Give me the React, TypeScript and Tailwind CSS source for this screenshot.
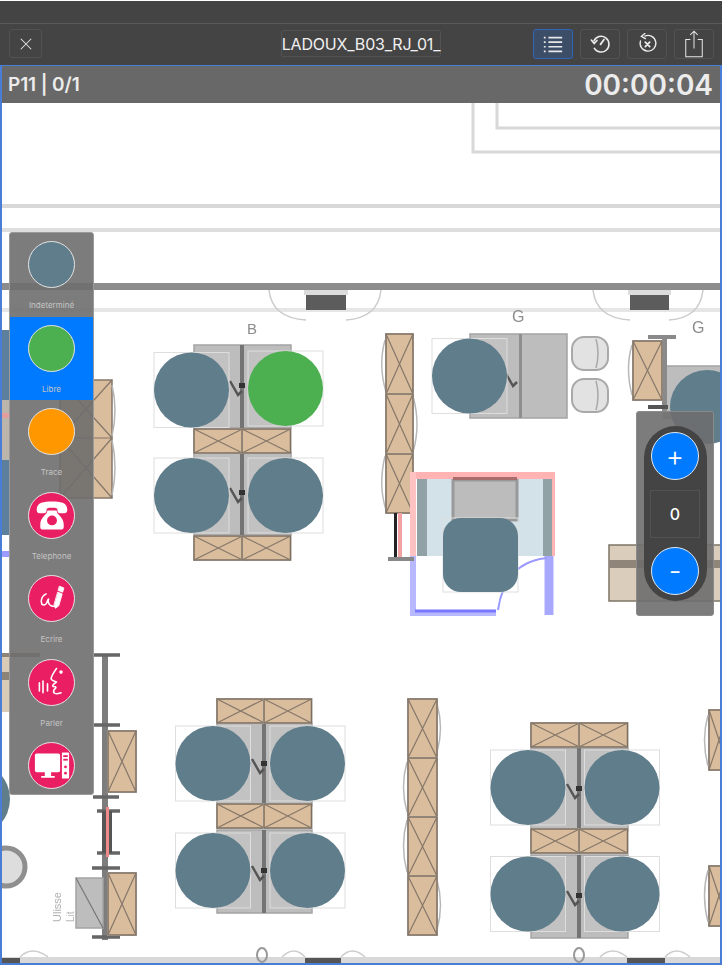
import React from "react";

function Cabinet({ x, y, w, h }: { x: number; y: number; w: number; h: number }) {
  return (
    <g>
      <rect x={x - 1} y={y - 1} width={w + 2} height={h + 2} fill="#cfcfcf" />
      <rect x={x} y={y} width={w} height={h} fill="#d9bd9d" stroke="#7d6f60" strokeWidth={1.5} />
      <path d={`M${x} ${y} L${x + w} ${y + h} M${x + w} ${y} L${x} ${y + h}`} stroke="#85776a" strokeWidth={1.2} fill="none" />
    </g>
  );
}

function DeskPair({ x, y, w, h, cx }: { x: number; y: number; w: number; h: number; cx: number }) {
  return (
    <g>
      <rect x={x} y={y} width={w} height={h} fill="#bdbdbd" stroke="#a4a4a4" strokeWidth={1.5} />
      <rect x={cx - 2} y={y} width={4} height={h} fill="#747474" />
      <path d={`M${cx - 12} ${y + 36} l8 14 l4 -4`} stroke="#555" strokeWidth={2.5} fill="none" />
      <rect x={cx - 3} y={y + 38} width={6} height={5} fill="#333" />
    </g>
  );
}

function Marker({ cx, cy, fill = "#607d8b" }: { cx: number; cy: number; fill?: string }) {
  return <circle cx={cx} cy={cy} r={37.5} fill={fill} />;
}

function Frame({ cx, cy }: { cx: number; cy: number }) {
  return <rect x={cx - 37.5} y={cy - 37.5} width={75} height={75} fill="#ffffff" fillOpacity={0.08} stroke="#dedede" strokeWidth={1} />;
}

function Quad({ dx, dy, cx, deskW, top, mid, circles }: { dx: number; dy: number; cx: number; deskW: number; top: number; mid: number; circles: [number, number][] }) {
  return (
    <g>
      <DeskPair x={dx} y={dy} w={deskW} h={83} cx={cx} />
      <DeskPair x={dx} y={dy + 107} w={deskW} h={83} cx={cx} />
      <Cabinet x={dx} y={top} w={deskW / 2} h={24} />
      <Cabinet x={cx} y={top} w={deskW / 2} h={24} />
      <Cabinet x={dx} y={mid} w={deskW / 2} h={24} />
      <Cabinet x={cx} y={mid} w={deskW / 2} h={24} />
      {circles.map(([a, b]) => (
        <Frame key={`${a}-${b}`} cx={a} cy={b} />
      ))}
      {circles.map(([a, b]) => (
        <Marker key={`${a}-${b}`} cx={a} cy={b} />
      ))}
    </g>
  );
}

function Chair({ x, y }: { x: number; y: number }) {
  return (
    <g>
      <rect x={x} y={y} width={36} height={33} rx={12} fill="#e2e2e2" stroke="#a9a9a9" strokeWidth={2} />
      <path d={`M${x + 24} ${y + 2}Q${x + 28} ${y + 16} ${x + 24} ${y + 31}`} stroke="#a9a9a9" strokeWidth={1.5} fill="none" />
    </g>
  );
}

function FloorPlan() {
  return (
    <svg viewBox="2 103 718 860" className="absolute left-0 top-0 h-full w-full blur-[0.7px]">
      {/* walls */}
      <path d="M473 103V152H722M497 103V128H722" stroke="#d8d8d8" strokeWidth={3} fill="none" />
      <rect x={0} y={204} width={722} height={4} fill="#d9d9d9" />
      <rect x={0} y={228} width={722} height={4} fill="#dedede" />
      <rect x={0} y={283} width={722} height={7} fill="#8c8c8c" />
      <rect x={0} y={308} width={722} height={4} fill="#e6e6e6" />
      <rect x={306} y={295} width={40} height={15} fill="#5c5c5c" />
      <rect x={630} y={295} width={39} height={15} fill="#5c5c5c" />
      <rect x={304} y={290} width={44} height={5} fill="#dcdcdc" />
      <rect x={628} y={290} width={43} height={5} fill="#dcdcdc" />
      <path d="M269 290Q272 318 306 320M381 290Q378 318 346 320M593 290Q596 318 630 320M703 290Q700 318 669 320" stroke="#cccccc" strokeWidth={1.5} fill="none" />
      <text x={247} y={334} fontSize={15} fill="#8c8c8c" fontFamily="Liberation Sans, sans-serif">B</text>
      <text x={512} y={322} fontSize={16} fill="#8c8c8c" fontFamily="Liberation Sans, sans-serif">G</text>
      <text x={692} y={333} fontSize={16} fill="#8c8c8c" fontFamily="Liberation Sans, sans-serif">G</text>

      {/* left side, mostly under the palette */}
      <rect x={0} y={330} width={10} height={70} fill="#5b7f9c" />
      <rect x={0} y={400} width={10} height={60} fill="#bcb5ac" />
      <rect x={0} y={413} width={10} height={5} fill="#e49c9c" />
      <rect x={0} y={460} width={10} height={75} fill="#5b7f9c" />
      <rect x={0} y={551} width={10} height={6} fill="#9c9cff" />
      <rect x={0} y={655} width={10} height={57} fill="#d9cbb8" />
      <rect x={0} y={672} width={10} height={8} fill="#8d8478" />
      <rect x={0} y={653} width={40} height={4} fill="#8d8478" />
      <circle cx={-27} cy={799} r={37} fill="#607d8b" />
      <circle cx={6} cy={867} r={19} fill="#dddddd" stroke="#8f8f8f" strokeWidth={5} />

      {/* tan block next to the palette */}
      <rect x={60} y={380} width={52} height={118} fill="#d9bd9d" stroke="#85776a" strokeWidth={1.5} />
      <path d="M60 380L112 438M112 380L60 438M60 438L112 498M112 438L60 498M60 438H112" stroke="#85776a" strokeWidth={1.2} fill="none" />
      <path d="M112 385Q118 410 112 436M112 440Q118 468 112 495" stroke="#b5b5b5" strokeWidth={1.5} fill="none" />

      {/* desks */}
      <Quad dx={194} dy={345} cx={242} deskW={97} top={429} mid={536} circles={[[191.5, 390], [191.5, 495.5], [285.5, 495.5]]} />
      <Frame cx={285.5} cy={388.5} />
      <Marker cx={285.5} cy={388.5} fill="#4caf50" />

      <Quad dx={217} dy={723} cx={264} deskW={95} top={699} mid={804} circles={[[213, 763.5], [307.5, 763.5], [213, 870.5], [307.5, 870.5]]} />
      <Quad dx={531} dy={748} cx={579} deskW={97} top={723} mid={829} circles={[[528, 787.5], [622, 787.5], [528, 894], [622, 894]]} />

      {/* vertical cabinets */}
      <path d="M385 340Q378 365 386 392M413 396Q421 425 413 452M385 456Q378 485 386 510" stroke="#b8b8b8" strokeWidth={1.5} fill="none" />
      <Cabinet x={386} y={334} w={27} h={60} />
      <Cabinet x={386} y={394} w={27} h={60} />
      <Cabinet x={386} y={454} w={27} h={59} />
      <path d="M437 704Q444 728 437 752M407 762Q400 787 407 812M407 820Q400 846 407 872M437 880Q444 905 437 930" stroke="#b8b8b8" strokeWidth={1.5} fill="none" />
      <Cabinet x={408} y={699} w={29} h={59} />
      <Cabinet x={408} y={758} w={29} h={59} />
      <Cabinet x={408} y={817} w={29} h={59} />
      <Cabinet x={408} y={876} w={29} h={59} />
      <Cabinet x={709} y={710} w={20} h={60} />
      <Cabinet x={709} y={866} w={20} h={60} />
      <path d="M708 715Q701 740 708 766M708 870Q701 895 708 922" stroke="#b8b8b8" strokeWidth={1.5} fill="none" />

      {/* single desk */}
      <rect x={470} y={334} width={97} height={84} fill="#bdbdbd" stroke="#a4a4a4" strokeWidth={1.5} />
      <rect x={519} y={334} width={3} height={84} fill="#8e8e8e" />
      <path d="M505 372l8 14 l4 -4" stroke="#555" strokeWidth={2.5} fill="none" />
      <Frame cx={469.5} cy={376} />
      <Marker cx={469.5} cy={376} />
      <Chair x={572} y={337} />
      <Chair x={572} y={379} />

      {/* right column */}
      <rect x={664} y={366} width={58} height={52} fill="#bdbdbd" stroke="#a4a4a4" strokeWidth={1.5} />
      <rect x={662} y={335} width={5} height={76} fill="#8a8a8a" />
      <rect x={648} y={335} width={28} height={4} fill="#8a8a8a" />
      <rect x={648} y={405} width={20} height={4} fill="#555555" />
      <path d="M632 345Q625 368 632 395" stroke="#b8b8b8" strokeWidth={1.5} fill="none" />
      <Cabinet x={633} y={341} w={29} h={59} />
      <circle cx={707} cy={407} r={37} fill="#607d8b" />
      <rect x={609} y={545} width={113} height={56} fill="#dacdbb" stroke="#7d7468" strokeWidth={1.5} />
      <rect x={609} y={560} width={113} height={8} fill="#8f8578" />

      {/* room */}
      <rect x={417} y={479} width={135} height={77} fill="#d3e2e8" />
      <rect x={417} y={479} width={10} height={77} fill="#91a2a6" />
      <rect x={543} y={479} width={10} height={77} fill="#91a2a6" />
      <rect x={453} y={480} width={64} height={40} fill="#bcbcbc" stroke="#999" strokeWidth={3} />
      <rect x={411} y={472} width={144} height={7} fill="#ffb3b3" />
      <rect x={410} y={472} width={6} height={84} fill="#ffc2c2" />
      <rect x={552} y={472} width={3} height={84} fill="#ffb3b3" />
      <rect x={453} y={477} width={64} height={3} fill="#a86c6c" />
      <path d="M413 556V613H496" stroke="#b8b8ff" strokeWidth={6} fill="none" />
      <path d="M549 556V615" stroke="#a8a8ff" strokeWidth={9} fill="none" />
      <path d="M415 611H496" stroke="#7777ff" strokeWidth={3} fill="none" />
      <path d="M498 610Q505 562 547 558" stroke="#9999ff" strokeWidth={2} fill="none" />
      <rect x={394} y={513} width={3} height={45} fill="#222" />
      <rect x={398} y={513} width={4} height={45} fill="#f2a2a2" />
      <rect x={388} y={557} width={26} height={4} fill="#888" />
      <rect x={443} y={518} width={75} height={74} fill="none" stroke="#dedede" />
      <rect x={443} y={518} width={75} height={74} rx={18} fill="#607d8b" />

      {/* lower left wall */}
      <rect x={102} y={655} width={6} height={285} fill="#7d7d7d" />
      <path d="M94 655H120M93 725H120M93 797H119M97 811H120M97 853H120M92 868H120M92 937H120" stroke="#666" strokeWidth={3.5} fill="none" />
      <rect x={102} y={811} width={10} height={42} fill="#555" />
      <rect x={106} y={807} width={3} height={50} fill="#ef8a8a" />
      <Cabinet x={108} y={731} w={28} h={61} />
      <rect x={76} y={878} width={27} height={50} fill="#bdbdbd" stroke="#a4a4a4" strokeWidth={1.5} />
      <path d="M76 878L103 928" stroke="#777" strokeWidth={1.2} />
      <Cabinet x={108} y={873} w={28} h={62} />
      <text transform="rotate(-90 61 922)" x={61} y={922} fontSize={11} fill="#b0b0b0" fontFamily="Liberation Sans, sans-serif">Ulisse</text>
      <text transform="rotate(-90 74 922)" x={74} y={922} fontSize={10} fill="#b8b8b8" fontFamily="Liberation Sans, sans-serif">Lit</text>

      {/* bottom wall */}
      <rect x={0} y={957} width={722} height={6} fill="#d8d8d8" />
      <rect x={0} y={958} width={20} height={5} fill="#555" />
      <rect x={305} y={958} width={36} height={5} fill="#555" />
      <rect x={627} y={958} width={38} height={5} fill="#555" />
      <path d="M20 957Q32 945 48 957M282 957Q294 945 305 957M341 957Q352 945 365 957M600 957Q612 945 627 957M665 957Q676 945 690 957" stroke="#cccccc" strokeWidth={1.5} fill="none" />
      <ellipse cx={262} cy={955} rx={5} ry={7} fill="none" stroke="#999" strokeWidth={2} />
      <ellipse cx={579} cy={955} rx={5} ry={7} fill="none" stroke="#999" strokeWidth={2} />
    </svg>
  );
}

function PhoneIcon() {
  return (
    <svg viewBox="0 0 40 40" className="h-[36px] w-[36px]">
      <path d="M3 14C3 6 11 5 20 5s17 1 17 9c0 3-1 4-3 4h-5c-2 0-3-1-3-3v-2c-2-1-3-1-6-1s-4 0-6 1v2c0 2-1 3-3 3H6c-2 0-3-1-3-4Z" fill="#fff" />
      <path d="M15 15h10l1 3c3 3 7 7 7 12v4c0 1-1 2-2 2H9c-1 0-2-1-2-2v-4c0-5 4-9 7-12Z" fill="#fff" />
      <circle cx={20} cy={26} r={5.5} fill="#e91e63" />
    </svg>
  );
}

function WriteIcon() {
  return (
    <svg viewBox="0 0 40 40" className="h-[34px] w-[34px]" fill="none" stroke="#fff" strokeLinecap="round" strokeLinejoin="round">
      <path d="M13 14c-4 1-7 7-5 12 2 2 5 1 6-2 1-2 1-4 2-4-1 3 0 7 3 8 2 1 3 0 5 1" strokeWidth={1.8} />
      <path d="M27 12l5 2-4 14-4 3-1.500-4Z" fill="#fff" strokeWidth={1} />
      <path d="M29 5l5 2-1.500 5-5-2Z" fill="#fff" strokeWidth={1} />
    </svg>
  );
}

function SpeakIcon() {
  return (
    <svg viewBox="0 0 40 40" className="h-[36px] w-[36px]" fill="none" stroke="#fff" strokeLinecap="round" strokeLinejoin="round">
      <path d="M25 5c-2 3-5 7-6 11M19 16c0 2 3 3 6 4-2 2-5 3-4 5 2 0 4 0 3 2-1 1-3 2-2 5 2 2 5 1 8 0" strokeWidth={1.800} />
      <circle cx={30} cy={9} r={2} fill="#fff" stroke="none" />
      <path d="M6 21v9M10 19v13M15 22v8" strokeWidth={1.800} />
    </svg>
  );
}

function ComputerIcon() {
  return (
    <svg viewBox="0 0 40 40" className="h-[36px] w-[36px]">
      <path d="M3 6h24a2 2 0 0 1 2 2v17a2 2 0 0 1-2 2H19v4h4v2H8v-2h4v-4H3a2 2 0 0 1-2-2V8a2 2 0 0 1 2-2Z" fill="#fff" />
      <rect x={31} y={5} width={8} height={29} rx={1} fill="#fff" />
      <rect x={32.5} y={8} width={5} height={2} fill="#e91e63" />
      <rect x={32.5} y={12} width={5} height={2} fill="#e91e63" />
      <circle cx={35} cy={21} r={1.5} fill="#e91e63" />
      <circle cx={35} cy={28} r={1.5} fill="#e91e63" />
    </svg>
  );
}

function PaletteItem({ label, color, active, last, children }: { label?: string; color: "slate" | "green" | "orange" | "pink"; active?: boolean; last?: boolean; children?: React.ReactNode }) {
  const bg = { slate: "bg-[#607d8b]", green: "bg-[#4caf50]", orange: "bg-[#ff9800]", pink: "bg-[#e91e63]" }[color];
  return (
    <div className={`flex flex-col items-center pt-[8px] ${last ? "h-[61px]" : "h-[83.5px]"} ${active ? "bg-[#007aff]" : ""}`}>
      <div className={`flex h-[47px] w-[47px] shrink-0 items-center justify-center rounded-full border border-[#e4e4e4] ${bg}`}>{children}</div>
      {label && <div className="mt-[12px] text-[8px] leading-[10px] text-[#c4c4c4]">{label}</div>}
    </div>
  );
}

function ToolButton({ active, children }: { active?: boolean; children: React.ReactNode }) {
  return (
    <div className={`flex h-[30px] w-[40px] items-center justify-center rounded-[3px] border ${active ? "border-[#2f66b8] bg-[#3c4d68]" : "border-[#525252]"}`}>
      {children}
    </div>
  );
}

export default function App() {
  return (
    <div className="h-[970px] w-[728px] bg-white pt-px font-['Inter','Liberation_Sans',sans-serif]">
      <div className="flex h-[964px] w-[722px] flex-col">
        <div className="flex h-[64px] shrink-0 flex-col bg-[#444444]">
          <div className="h-[23px] shrink-0 border-b border-[#5b5b5b]" />
          <div className="flex flex-1 items-center pb-[2px] pl-[9px] pr-[8px]">
            <div className="flex h-[29px] w-[33px] items-center justify-center rounded-[3px] border border-[#525252]">
              <svg viewBox="0 0 16 16" className="h-[14px] w-[14px]" fill="none" stroke="#e6e6e6" strokeWidth={1.2}>
                <path d="M2 2L14 14M14 2L2 14" />
              </svg>
            </div>
            <div className="flex flex-1 justify-center pl-[147px]">
              <div className="flex h-[27px] items-center rounded-[2px] border border-[#525252] text-[16px] leading-none tracking-[-0.2px] text-[#f0f0f0]">LADOUX_B03_RJ_01_</div>
            </div>
            <div className="flex gap-[7px]">
              <ToolButton active>
                <svg viewBox="0 0 24 24" className="h-[22px] w-[22px]" fill="none" stroke="#e8e8e8" strokeWidth={1.8}>
                  <path d="M7 5H22M7 10H22M7 15H22M7 20H22M2 5H4M2 10H4M2 15H4M2 20H4" />
                </svg>
              </ToolButton>
              <ToolButton>
                <svg viewBox="0 0 24 24" className="h-[21px] w-[21px]" fill="none" stroke="#ececec" strokeWidth={1.8} strokeLinecap="round">
                  <path d="M4.5 9A9 9 0 1 1 5 17.5" />
                  <path d="M1.500 8L4.800 12L8 8.500" />
                  <path d="M12 13L16 7.500" strokeWidth={2} />
                </svg>
              </ToolButton>
              <ToolButton>
                <svg viewBox="0 0 24 24" className="h-[21px] w-[21px]" fill="none" stroke="#ececec" strokeWidth={1.5} strokeLinecap="round">
                  <path d="M9 3.500A9 9 0 1 1 4 9" />
                  <path d="M9 0.500L5 3.800L9.500 6.500" />
                  <path d="M9.500 10.500L14.500 15.500M14.500 10.500L9.500 15.500" strokeWidth={2} />
                </svg>
              </ToolButton>
              <ToolButton>
                <svg viewBox="0 0 24 30" className="h-[28px] w-[22px]" fill="none" stroke="#e6e6e6" strokeWidth={1.1}>
                  <path d="M8 10H3V29H21V10H16M12 20V1M8 5L12 1L16 5" />
                </svg>
              </ToolButton>
            </div>
          </div>
        </div>
        <div className="relative flex-1 overflow-hidden border-x-2 border-t border-b-2 border-[#4a7ed6] bg-white">
          <div className="flex h-[37px] items-center justify-between bg-[#686868] pl-[6px] pr-[7px] text-[#ececec]">
            <span className="text-[19px] font-semibold leading-none tracking-[-0.1px]">P11 | 0/1</span>
            <span className="text-[28px] font-semibold leading-none">00:00:04</span>
          </div>
          <div className="absolute bottom-0 left-0 right-0 top-[37px]">
            <FloorPlan />
            <div className="absolute left-[7px] top-[129px] h-[563px] w-[85px] overflow-hidden rounded-[3px] border border-[#9a9a9a] bg-[#6e6e6e]/90">
              <PaletteItem label="Indeterminé" color="slate" />
              <PaletteItem label="Libre" color="green" active />
              <PaletteItem label="Trace" color="orange" />
              <PaletteItem label="Telephone" color="pink"><PhoneIcon /></PaletteItem>
              <PaletteItem label="Ecrire" color="pink"><WriteIcon /></PaletteItem>
              <PaletteItem label="Parler" color="pink"><SpeakIcon /></PaletteItem>
              <PaletteItem color="pink" last><ComputerIcon /></PaletteItem>
            </div>
            <div className="absolute left-[634px] top-[308px] flex h-[205px] w-[78px] items-center justify-center rounded-[3px] border border-[#8a8a8a] bg-[#6e6e6e]/90">
              <div className="flex h-[175px] w-[63px] flex-col items-center justify-between rounded-full bg-[#444444] py-[6px]">
                <button className="flex h-[48px] w-[48px] items-center justify-center rounded-full border border-[#dfe9f5] bg-[#007aff] text-[28px] font-light leading-none text-white">+</button>
                <div className="flex h-[48px] w-[50px] items-center justify-center border border-[#525252] text-[16px] font-medium text-white">0</div>
                <button className="flex h-[48px] w-[48px] items-center justify-center rounded-full border border-[#dfe9f5] bg-[#007aff] text-[28px] font-light leading-none text-white">-</button>
              </div>
            </div>
          </div>
        </div>
      </div>
    </div>
  );
}
